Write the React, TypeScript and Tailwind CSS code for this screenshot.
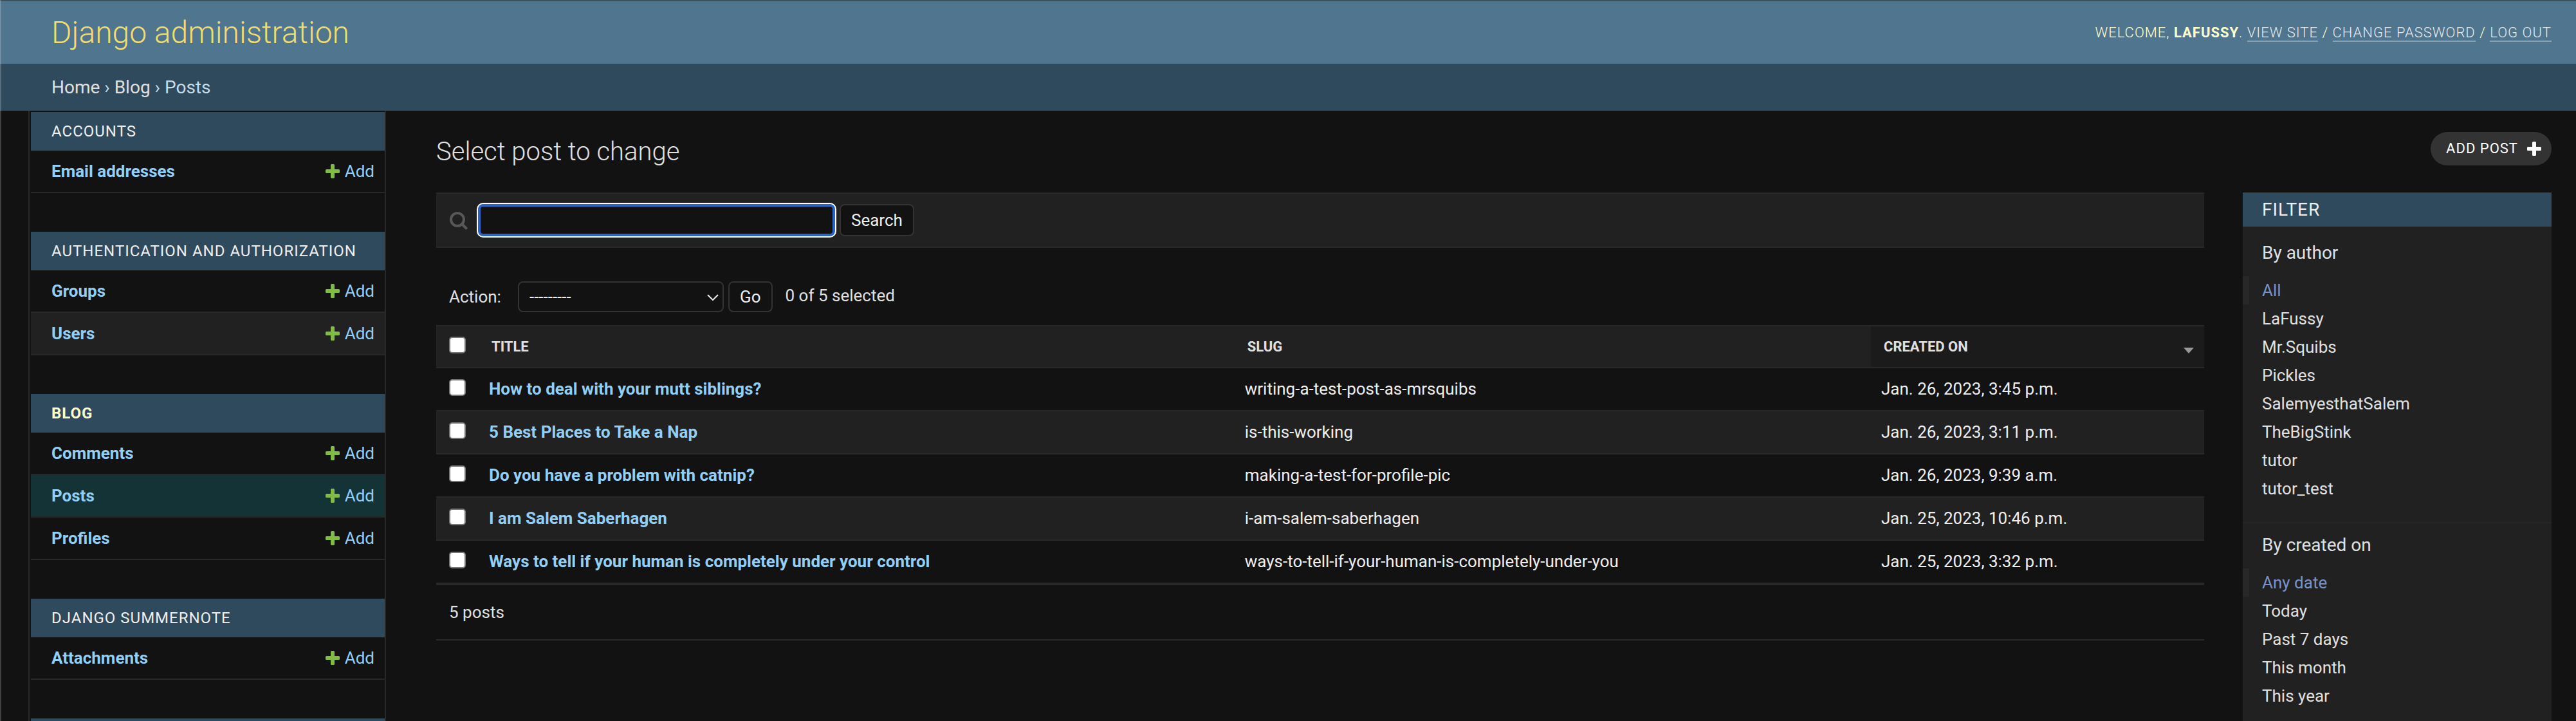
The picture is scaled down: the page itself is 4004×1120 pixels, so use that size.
import { useState } from "react";

type Group = { name: string; current?: boolean; models: { name: string; current?: boolean }[] };

const groups: Group[] = [
  { name: "Accounts", models: [{ name: "Email addresses" }] },
  { name: "Authentication and Authorization", models: [{ name: "Groups" }, { name: "Users" }] },
  {
    name: "Blog",
    current: true,
    models: [{ name: "Comments" }, { name: "Posts", current: true }, { name: "Profiles" }],
  },
  { name: "Django Summernote", models: [{ name: "Attachments" }] },
];

const posts = [
  ["How to deal with your mutt siblings?", "writing-a-test-post-as-mrsquibs", "Jan. 26, 2023, 3:45 p.m."],
  ["5 Best Places to Take a Nap", "is-this-working", "Jan. 26, 2023, 3:11 p.m."],
  ["Do you have a problem with catnip?", "making-a-test-for-profile-pic", "Jan. 26, 2023, 9:39 a.m."],
  ["I am Salem Saberhagen", "i-am-salem-saberhagen", "Jan. 25, 2023, 10:46 p.m."],
  [
    "Ways to tell if your human is completely under your control",
    "ways-to-tell-if-your-human-is-completely-under-you",
    "Jan. 25, 2023, 3:32 p.m.",
  ],
];

const filters = [
  {
    title: "By author",
    options: ["All", "LaFussy", "Mr.Squibs", "Pickles", "SalemyesthatSalem", "TheBigStink", "tutor", "tutor_test"],
  },
  { title: "By created on", options: ["Any date", "Today", "Past 7 days", "This month", "This year"] },
];

function Plus({ className }: { className: string }) {
  return (
    <svg viewBox="0 0 22 22" className={className} fill="currentColor" aria-hidden="true">
      <path d="M9.500 0h3q1.500 0 1.500 1.500V8h6.500q1.500 0 1.500 1.500v3q0 1.500-1.500 1.500H14v6.500q0 1.500-1.500 1.500h-3Q8 22 8 20.500V14H1.500Q0 14 0 12.500v-3Q0 8 1.500 8H8V1.500Q8 0 9.500 0z" />
    </svg>
  );
}

function Check({ label, checked, onChange }: { label: string; checked: boolean; onChange: () => void }) {
  return (
    <input
      type="checkbox"
      aria-label={label}
      checked={checked}
      onChange={onChange}
      className="block size-[26px] appearance-none rounded-[5px] border-2 border-[#767676] bg-white checked:bg-[#2b63c6]"
    />
  );
}

function TopLink({ children }: { children: string }) {
  return (
    <a href="#" className="border-b-2 border-[#8aa3b4] text-[#e6e9eb]">
      {children}
    </a>
  );
}

function Header() {
  return (
    <header className="flex h-[99px] items-center justify-between border-t-2 border-[#3d505e] bg-[#4f758f] pr-[38px] pl-20 text-[#ffffcc]">
      <a href="#" className="text-[48px] leading-[56px] font-light text-[#f2dc6e]">
        Django administration
      </a>
      <nav className="text-[22px] leading-[26px] font-light tracking-[1px] uppercase">
        Welcome, <strong className="font-bold">LaFussy</strong>. <TopLink>View site</TopLink> /{" "}
        <TopLink>Change password</TopLink> / <TopLink>Log out</TopLink>
      </nav>
    </header>
  );
}

function Sidebar() {
  return (
    <nav className="ml-11 w-[556px] shrink-0 overflow-hidden border-x-2 border-[#282828] pt-0.5 pl-0.5">
      {groups.map((group) => (
        <section key={group.name} className="mb-[60px]">
          <h2 className="flex h-[60px] items-center bg-[#2f4a5c] px-8 text-[24px] tracking-[1px] uppercase">
            <a href="#" className={group.current ? "font-bold text-[#ffffcc]" : "text-[#eeeeee]"}>
              {group.name}
            </a>
          </h2>
          {group.models.map((model) => (
            <div
              key={model.name}
              className={
                "flex h-[66px] items-center justify-between border-b-2 border-[#282828] pr-4 pl-8 text-[26px] text-[#92cff6] " +
                (model.current ? "bg-[#143337]" : "even:bg-[#121212] odd:bg-[#212121]")
              }
            >
              <a href="#" className="font-bold">
                {model.name}
              </a>
              <a href="#" className="flex items-center gap-2" aria-label={"Add " + model.name}>
                <Plus className="size-[22px] text-[#82bb45]" />
                Add
              </a>
            </div>
          ))}
        </section>
      ))}
      <div className="h-[60px] bg-[#2f4a5c]" />
    </nav>
  );
}

function Results() {
  const [selected, setSelected] = useState<number[]>([]);
  const all = selected.length === posts.length;
  const toggle = (i: number) => setSelected((s) => (s.includes(i) ? s.filter((n) => n !== i) : [...s, i]));

  return (
    <div className="min-w-0 flex-1">
      <form
        className="flex h-[86px] items-center border-y-2 border-[#282828] bg-[#212121] px-5"
        onSubmit={(e) => e.preventDefault()}
      >
        <label htmlFor="searchbar" aria-label="Search posts" className="mr-[15px]">
          <svg viewBox="0 0 30 30" className="size-[30px] text-[#585858]" fill="none" stroke="currentColor" aria-hidden="true">
            <circle cx="13" cy="14" r="10" strokeWidth="4" />
            <path d="M20 21 26.500 27.500" strokeWidth="4" strokeLinecap="round" />
          </svg>
        </label>
        <input
          id="searchbar"
          type="text"
          className="mr-[7px] h-[50px] w-[555px] rounded-lg border-4 border-[#2b63c6] bg-[#121212] px-2 text-[26px] text-[#eeeeee] ring-2 ring-white outline-none"
        />
        <button type="submit" className="h-[50px] rounded-lg border-2 border-[#333333] bg-[#121212] px-4 text-[26px] text-[#eeeeee]">
          Search
        </button>
      </form>

      <div className="mt-[52px] mb-5 flex h-12 items-center pl-5 text-[26px] text-[#e0e0e0]">
        <label htmlFor="action" className="w-[107px]">
          Action:
        </label>
        <div className="relative">
          <select
            id="action"
            className="block h-12 w-[320px] appearance-none rounded-lg border-2 border-[#333333] bg-[#121212] px-4 text-[26px] text-[#eeeeee]"
          >
            <option>---------</option>
            <option>Delete selected posts</option>
          </select>
          <svg viewBox="0 0 18 10" className="pointer-events-none absolute top-5 right-2 h-2.5 w-[18px]" fill="none" stroke="#eeeeee" strokeWidth="2" aria-hidden="true">
            <path d="M1 1 9 9 17 1" />
          </svg>
        </div>
        <button type="button" className="ml-[7px] h-12 rounded-lg border-2 border-[#333333] bg-[#121212] px-4 text-[#eeeeee]">
          Go
        </button>
        <span className="ml-5 pb-1">
          {selected.length} of {posts.length} selected
        </span>
      </div>

      <table className="w-full table-fixed border-separate border-spacing-0 text-left text-[26px] leading-[30px] text-[#eeeeee]">
        <colgroup>
          <col className="w-[66px]" />
          <col className="w-[42.75%]" />
          <col />
          <col className="w-[518px]" />
        </colgroup>
        <thead>
          <tr className="h-[67px] bg-[#212121] text-[22px] text-[#e0e0e0] uppercase">
            <th scope="col" className="border-y-2 border-[#282828] pb-1.5 pl-5">
              <Check label="Select all" checked={all} onChange={() => setSelected(all ? [] : posts.map((_, i) => i))} />
            </th>
            <th scope="col" className="border-y-2 border-[#282828] pl-5">
              <a href="#">Title</a>
            </th>
            <th scope="col" className="border-y-2 border-[#282828] pl-5">
              <a href="#">Slug</a>
            </th>
            <th scope="col" className="border-y-2 border-[#282828] bg-[#1b1b1b] pr-4 pl-5">
              <div className="flex items-center justify-between">
                <a href="#">Created on</a>
                <svg viewBox="0 0 16 9" className="mt-3 h-[9px] w-4" fill="#999999" aria-hidden="true">
                  <path d="M0 0h16L8 9z" />
                </svg>
              </div>
            </th>
          </tr>
        </thead>
        <tbody>
          {posts.map(([title, slug, created], i) => (
            <tr key={slug} className="h-[67px] even:bg-[#212121]">
              <td className="border-b-2 border-[#282828] pb-1.5 pl-5">
                <Check label={"Select " + title} checked={selected.includes(i)} onChange={() => toggle(i)} />
              </td>
              <th scope="row" className="border-b-2 border-[#282828] pb-0.5 pl-4 font-bold text-[#92cff6]">
                <a href="#">{title}</a>
              </th>
              <td className="border-b-2 border-[#282828] pb-0.5 pl-4">{slug}</td>
              <td className="border-b-2 border-[#282828] pb-0.5 pl-4">{created}</td>
            </tr>
          ))}
        </tbody>
      </table>
      <p className="flex h-[88px] items-center border-y-2 border-[#282828] pl-5 text-[26px] text-[#e0e0e0]">
        {posts.length} posts
      </p>
    </div>
  );
}

function Filters() {
  return (
    <aside className="w-[480px] shrink-0 bg-[#212121] text-[#e0e0e0]">
      <h2 className="mb-[7px] flex h-[53px] items-center bg-[#2f4a5c] px-[30px] text-[28px] tracking-[1px] text-[#eeeeee] uppercase">
        Filter
      </h2>
      {filters.map((filter) => (
        <section key={filter.title} className="border-b-2 border-[#262626] pb-[30px]">
          <h3 className="px-[30px] pt-[17px] pb-5 text-[28px] leading-[33px]">{filter.title}</h3>
          <ul>
            {filter.options.map((option, i) => (
              <li
                key={option}
                className={
                  "flex h-11 items-center border-l-[10px] pl-5 text-[26px] " +
                  (i === 0 ? "border-[#282828] text-[#7893c8]" : "border-transparent")
                }
              >
                <a href="#">{option}</a>
              </li>
            ))}
          </ul>
        </section>
      ))}
    </aside>
  );
}

export default function App() {
  return (
    <div className="relative flex h-screen flex-col overflow-hidden bg-[#121212] font-['Roboto',sans-serif] leading-[30px]">
      <Header />
      <nav aria-label="Breadcrumbs" className="h-[73px] shrink-0 bg-[#2f4a5c] px-20 text-[28px] leading-[73px] text-[#c4dce8]">
        <a href="#" className="text-[#e0e0e0]">Home</a>
        {" › "}
        <a href="#" className="text-[#e0e0e0]">Blog</a>
        {" › Posts"}
      </nav>
      <div className="flex min-h-0 flex-1">
        <Sidebar />
        <main className="min-w-0 flex-1 pt-[33px] pr-[38px] pl-[78px]">
          <div className="mb-[42px] flex h-[52px] items-center justify-between">
            <h1 className="pt-2.5 text-[40px] leading-[48px] font-light text-[#e0e0e0]">Select post to change</h1>
            <a href="#" className="flex h-[52px] items-center gap-3.5 rounded-full bg-[#333333] pr-4 pl-6 text-[22px] tracking-[1px] text-white uppercase">
              Add post
              <Plus className="size-[22px]" />
            </a>
          </div>
          <div className="flex gap-[60px]">
            <Results />
            <Filters />
          </div>
        </main>
      </div>
      <div className="pointer-events-none absolute inset-y-0 left-0 w-0.5 bg-white/20" />
    </div>
  );
}
